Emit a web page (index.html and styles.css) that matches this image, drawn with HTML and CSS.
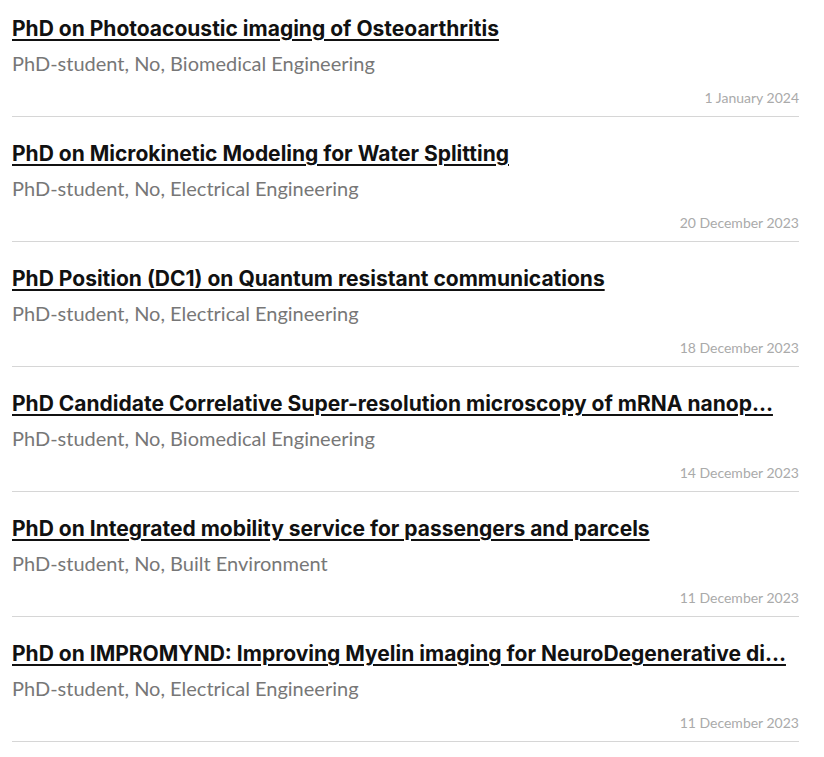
FILE: index.html
```html
<!DOCTYPE html>
<html lang="en">
<head>
    <meta charset="UTF-8">
    <meta name="viewport" content="width=device-width, initial-scale=1.0">
    <title>PhD positions</title>
    <link rel="stylesheet" href="styles.css">
</head>
<body>
    <ul class="vacancies">
        <li class="vacancy">
            <a class="vacancy-title" href="#">PhD on Photoacoustic imaging of Osteoarthritis</a>
            <p class="vacancy-meta">PhD-student, No, Biomedical Engineering</p>
            <span class="vacancy-date">1 January 2024</span>
        </li>
        <li class="vacancy">
            <a class="vacancy-title" href="#">PhD on Microkinetic Modeling for Water Splitting</a>
            <p class="vacancy-meta">PhD-student, No, Electrical Engineering</p>
            <span class="vacancy-date">20 December 2023</span>
        </li>
        <li class="vacancy">
            <a class="vacancy-title" href="#">PhD Position (DC1) on Quantum resistant communications</a>
            <p class="vacancy-meta">PhD-student, No, Electrical Engineering</p>
            <span class="vacancy-date">18 December 2023</span>
        </li>
        <li class="vacancy">
            <a class="vacancy-title" href="#">PhD Candidate Correlative Super-resolution microscopy of mRNA nanop…</a>
            <p class="vacancy-meta">PhD-student, No, Biomedical Engineering</p>
            <span class="vacancy-date">14 December 2023</span>
        </li>
        <li class="vacancy">
            <a class="vacancy-title" href="#">PhD on Integrated mobility service for passengers and parcels</a>
            <p class="vacancy-meta">PhD-student, No, Built Environment</p>
            <span class="vacancy-date">11 December 2023</span>
        </li>
        <li class="vacancy">
            <a class="vacancy-title" href="#">PhD on IMPROMYND: Improving Myelin imaging for NeuroDegenerative di…</a>
            <p class="vacancy-meta">PhD-student, No, Electrical Engineering</p>
            <span class="vacancy-date">11 December 2023</span>
        </li>
    </ul>
</body>
</html>
```

FILE: styles.css
```css
body {
    margin: 0;
    background-color: #fff;
    font-family: 'Lato', 'Open Sans', sans-serif;
}

.vacancies {
    list-style: none;
    margin: 0;
    padding: 0 25px 0 12px;
}

.vacancy {
    display: flex;
    flex-direction: column;
    padding-top: 15px;
    height: 101px;
    margin-bottom: 8px;
    border-bottom: 1px solid #d6d6d6;
}

.vacancy-title {
    align-self: flex-start;
    font-family: 'Inter', sans-serif;
    font-size: 21px;
    font-weight: 700;
    line-height: 28px;
    color: #111;
    white-space: nowrap;
    text-decoration: underline;
    text-decoration-thickness: 2px;
    text-underline-offset: 3px;
}

.vacancy-meta {
    margin: 7px 0 0;
    font-size: 20px;
    line-height: 26px;
    color: #777;
}

.vacancy-date {
    margin-top: auto;
    margin-bottom: 10px;
    align-self: flex-end;
    font-size: 14px;
    line-height: 16px;
    color: #aaa;
}
```
